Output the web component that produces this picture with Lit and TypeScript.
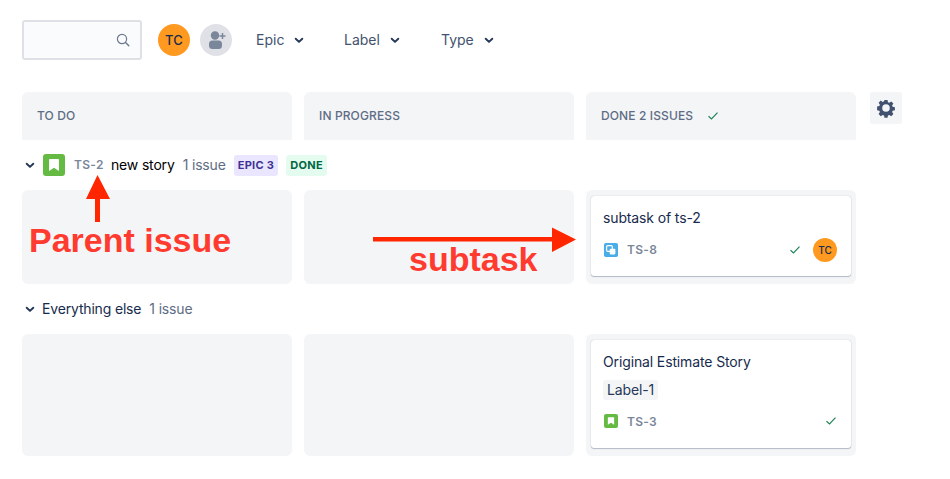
import { LitElement, html, css, svg } from "lit";
import { customElement } from "lit/decorators.js";

const chevron = () => html`<svg class="chev" viewBox="0 0 10 7" width="10" height="7"><path d="M1.700 1.700 5 4.900l3.300-3.200" fill="none" stroke="currentColor" stroke-width="1.900" stroke-linecap="round" stroke-linejoin="round"/></svg>`;
const check = html`<svg class="check" viewBox="0 0 12 10" width="12" height="10"><path d="M1.500 5.200 4.500 8 10.500 1.600" fill="none" stroke="#1f845a" stroke-width="1.200"/></svg>`;
const story = (size: number) => html`<svg viewBox="0 0 16 16" width=${size} height=${size}><rect width="16" height="16" rx="2.200" fill="#65ba43"/><path d="M5 3.600h6a.6.6 0 0 1 .6.6v8.200L8 10l-3.600 2.400V4.200a.6.6 0 0 1 .6-.6z" fill="#fff"/></svg>`;
const subtask = html`<svg viewBox="0 0 16 16" width="14" height="14"><rect width="16" height="16" rx="2" fill="#4bade8"/><rect x="3" y="3" width="6.500" height="6.500" rx="1.200" fill="none" stroke="#fff" stroke-width="1.300"/><rect x="6.500" y="6.500" width="6.500" height="6.500" rx="1.200" fill="#fff"/></svg>`;
const avatar = (cls: string) => html`<div class="avatar ${cls}">TC</div>`;

@customElement("app-root")
export class AppRoot extends LitElement {
  static styles = css`
    :host { display: block; position: relative; width: 950px; height: 479px; background: #fff; overflow: hidden;
      font-family: Inter, "Liberation Sans", sans-serif; color: #172b4d; box-sizing: border-box; padding: 20px 0 0 22px; }
    .t { margin-bottom: 2px; }
    .toolbar { display: flex; align-items: center; height: 40px; }
    .search { box-sizing: border-box; width: 120px; height: 40px; border: 2px solid #dfe1e6; border-radius: 3px; background: #fafbfc;
      display: flex; align-items: center; justify-content: flex-end; padding-right: 10px; color: #6b778c; }
    .avatar { border-radius: 50%; background: #ff991f; color: #172b4d; display: flex; align-items: center; justify-content: center; font-weight: 500; flex: none; }
    .avatar.lg { width: 32px; height: 32px; font-size: 13px; letter-spacing: 0.2px; margin-left: 16px; }
    .avatar.sm { width: 24px; height: 24px; font-size: 10px; margin-left: 12px; }
    .add { width: 32px; height: 32px; border-radius: 50%; background: #dfe1e6; margin-left: 10px; display: flex; align-items: center; justify-content: center; }
    .filter { display: flex; align-items: center; gap: 10px; font-size: 14px; color: #42526e; font-weight: 400; }
    .filter.epic { margin-left: 24px; width: 88px; }
    .filter.label { width: 97px; }
    .chev { color: #253858; flex: none; }

    .grid { display: grid; grid-template-columns: repeat(3, 270px) 32px; column-gap: 12px; margin-top: 32px; }
    .grid > .gear { margin-left: 2px; }
    .head { height: 48px; background: #f4f5f7; border-radius: 6px 6px 0 0; box-sizing: border-box; padding: 0 15px; display: flex; align-items: center; gap: 14px;
      font-size: 12px; font-weight: 500; color: #5e6c84; letter-spacing: 0.12px; }
    .gear { width: 32px; height: 32px; background: #f4f5f7; border-radius: 3px; display: flex; align-items: center; justify-content: center; }

    .swim { display: flex; align-items: center; font-size: 14px; height: 50px; padding-left: 3px; letter-spacing: -0.17px; }
    .swim .chev { margin-right: 8px; }
    .swim .key { font-size: 12px; font-weight: 600; color: #7a869a; margin-left: 9px; width: 37px; letter-spacing: 0.3px; }
    .swim .title { color: #000; }
    .swim .title.dark { color: #172b4d; margin-left: -1px; }
    .swim .count { color: #5e6c84; margin-left: 8px; }
    .lozenge { height: 21px; box-sizing: border-box; display: flex; align-items: center; padding: 0 4px; border-radius: 3px; font-size: 11px; font-weight: 700; letter-spacing: 0.3px; }
    .lozenge.epic { background: #eae6ff; color: #403294; margin-left: 8px; }
    .lozenge.done { background: #e3fcef; color: #006644; margin-left: 8px; }

    .row { display: grid; grid-template-columns: repeat(3, 270px); column-gap: 12px; }
    .cell { background: #f4f5f7; border-radius: 6px; padding: 6px 5px 8px; box-sizing: border-box; }
    .row.a .cell { height: 94px; }
    .row.b .cell { height: 122px; }
    .card { background: #fff; border-radius: 3px; box-shadow: 0 1px 1px rgba(9,30,66,.25), 0 0 1px rgba(9,30,66,.31); padding: 12px 14px 0 12px; box-sizing: border-box; display: flex; flex-direction: column; }
    .row.a .card { height: 80px; }
    .row.b .card { height: 108px; }
    .summary { font-size: 14px; line-height: 20px; color: #172b4d; letter-spacing: -0.13px; }
    .tag { align-self: flex-start; margin-top: 8px; background: #f4f5f7; border-radius: 3px; padding: 0 4px; font-size: 14px; line-height: 20px; color: #253858; letter-spacing: -0.13px; }
    .meta { display: flex; align-items: center; height: 24px; margin-top: 10px; padding-left: 1px; }
    .row.b .meta { margin-top: 9px; }
    .meta svg { flex: none; }
    .meta .id { font-size: 12px; font-weight: 600; color: #7a869a; margin-left: 9px; flex: 1; letter-spacing: 0.3px; }

    .overlay { position: absolute; left: 0; top: 0; pointer-events: none; }
    .note { position: absolute; font-family: "Liberation Sans", Arial, sans-serif; font-weight: 700; font-size: 34px; line-height: 40px; color: #ff3b30; white-space: nowrap; }
    .note.parent { left: 29px; top: 220px; }
    .note.sub { left: 409px; top: 239px; }
  `;

  render() {
    return html`
      <div class="toolbar">
        <div class="search"><svg viewBox="0 0 14 14" width="14" height="14"><circle cx="6" cy="6" r="4.600" fill="none" stroke="currentColor" stroke-width="1.200"/><path d="M9.500 9.500l3.300 3.300" stroke="currentColor" stroke-width="1.400" stroke-linecap="round"/></svg></div>
        ${avatar("lg")}
        <div class="add"><svg viewBox="0 0 20 20" width="20" height="20"><circle cx="9" cy="5.500" r="4.200" fill="#7a869a"/><path d="M3 14a3.500 3.500 0 0 1 3.500-3.500h6A3.500 3.500 0 0 1 16 14v1.500a3.500 3.500 0 0 1-3.500 3.500h-6A3.500 3.500 0 0 1 3 15.500z" fill="#7a869a"/><path d="M16.500 3v6M13.500 6h6" stroke="#7a869a" stroke-width="1.500"/></svg></div>
        <div class="filter epic"><span class="t">Epic</span> ${chevron()}</div>
        <div class="filter label"><span class="t">Label</span> ${chevron()}</div>
        <div class="filter"><span class="t">Type</span> ${chevron()}</div>
      </div>

      <div class="grid">
        <div class="head"><span class="t">TO DO</span></div>
        <div class="head"><span class="t">IN PROGRESS</span></div>
        <div class="head"><span class="t">DONE 2 ISSUES</span> ${check}</div>
        <div class="gear"><svg viewBox="0 0 20 20" width="20" height="20"><path fill-rule="evenodd" fill="#42526e" d="M8.300 1h3.400l.5 2.500 1.400.6 2.200-1.400 2.400 2.400-1.400 2.200.6 1.400 2.500.5v3.400l-2.500.5-.6 1.400 1.400 2.200-2.400 2.400-2.200-1.400-1.400.6-.5 2.500H8.300l-.5-2.500-1.400-.6-2.200 1.400-2.400-2.400 1.400-2.200-.6-1.400-2.500-.5V8.300l2.500-.5.6-1.400-1.400-2.200 2.400-2.400 2.200 1.400 1.400-.6zM10 5.800a4.200 4.200 0 1 0 0 8.400 4.200 4.200 0 0 0 0-8.400z" transform="translate(1 1) scale(.9)"/></svg></div>
      </div>

      <div class="swim">
        ${chevron()}
        ${story(22)}
        <span class="key t">TS-2</span>
        <span class="title t">new story</span>
        <span class="count t">1 issue</span>
        <span class="lozenge epic">EPIC 3</span>
        <span class="lozenge done">DONE</span>
      </div>
      <div class="row a">
        <div class="cell"></div>
        <div class="cell"></div>
        <div class="cell">
          <div class="card">
            <div class="summary">subtask of ts-2</div>
            <div class="meta">${subtask}<span class="id t">TS-8</span>${check}${avatar("sm")}</div>
          </div>
        </div>
      </div>

      <div class="swim">
        ${chevron()}
        <span class="title dark t">Everything else</span>
        <span class="count t">1 issue</span>
      </div>
      <div class="row b">
        <div class="cell"></div>
        <div class="cell"></div>
        <div class="cell">
          <div class="card">
            <div class="summary">Original Estimate Story</div>
            <div class="tag">Label-1</div>
            <div class="meta">${story(14)}<span class="id">TS-3</span>${check}</div>
          </div>
        </div>
      </div>

      <svg class="overlay" width="950" height="479" viewBox="0 0 950 479">
        ${svg`<path d="M95 222v-23h-9l11.500-24 12.500 24h-10v23z" fill="#ff2600"/>
        <path d="M373 237h179v-9.500l24 12-24 12.500v-10.500H373z" fill="#ff2600"/>`}
      </svg>
      <div class="note parent">Parent issue</div>
      <div class="note sub">subtask</div>
    `;
  }
}
